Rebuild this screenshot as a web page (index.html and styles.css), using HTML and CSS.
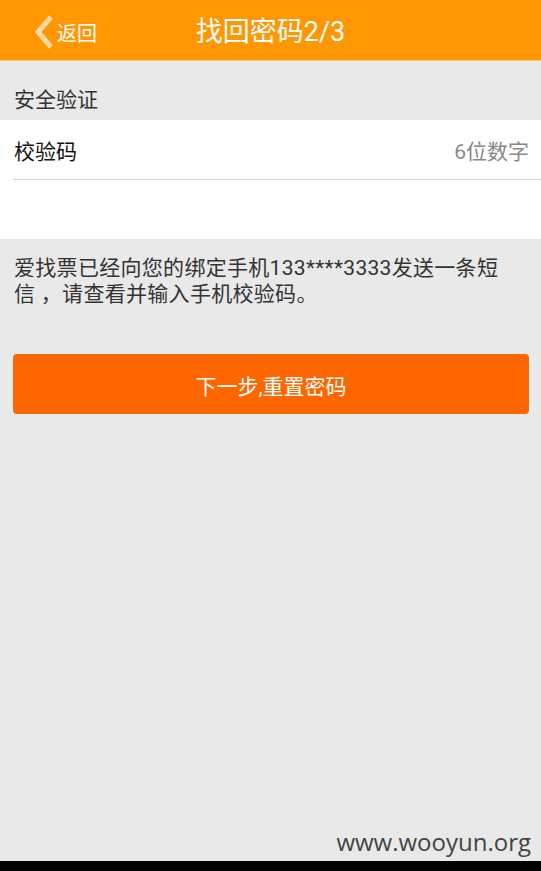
FILE: index.html
```html
<!DOCTYPE html>
<html lang="zh-CN">
<head>
<meta charset="utf-8">
<title>找回密码2/3</title>
<link rel="stylesheet" href="styles.css">
</head>
<body>
<div class="screen">
  <header class="topbar">
    <div class="back">
      <svg class="chev" width="22" height="34" viewBox="0 0 22 34"><polyline points="18,2 5,17 18,32" fill="none" stroke="#ffd9a3" stroke-width="5"/></svg>
      <span class="back-text">返回</span>
    </div>
    <h1 class="title">找回密码2/3</h1>
  </header>
  <main class="content">
    <div class="section-title">安全验证</div>
    <div class="form-block">
      <div class="row">
        <span class="label">校验码</span>
        <span class="placeholder">6位数字</span>
      </div>
      <div class="row-empty"></div>
    </div>
    <p class="msg">爱找票已经向您的绑定手机133****3333发送一条短信 ，请查看并输入手机校验码。</p>
    <button class="btn">下一步,重置密码</button>
    <div class="watermark">www.wooyun.org</div>
  </main>
  <div class="navbar"></div>
</div>
</body>
</html>
```
FILE: styles.css
```css
* { box-sizing: border-box; }
html, body { margin: 0; padding: 0; }
body {
  width: 541px;
  height: 871px;
  overflow: hidden;
  font-family: Roboto, "Noto Sans CJK SC", sans-serif;
  background: #e9e9e9;
}
.screen {
  display: flex;
  flex-direction: column;
  height: 871px;
}
.topbar {
  height: 61px;
  background: #ff9702;
  border-bottom: 1px solid #ffc56e;
  position: relative;
  display: flex;
  align-items: center;
  justify-content: center;
}
.back {
  position: absolute;
  left: 33px;
  top: 13px;
  display: flex;
  align-items: center;
}
.chev { display: block; }
.back-text {
  color: #fff;
  font-size: 20px;
  line-height: 34px;
  margin-left: 2px;
  padding-top: 4px;
}
.title {
  margin: 3px 0 0 0;
  color: #fff;
  font-size: 27px;
  font-weight: normal;
  line-height: 56px;
}
.content {
  flex: 1;
  position: relative;
  display: flex;
  flex-direction: column;
}
.section-title {
  height: 59px;
  padding: 25px 0 0 14px;
  font-size: 21px;
  line-height: 28px;
  color: #333;
}
.form-block {
  background: #fff;
}
.row {
  height: 60px;
  margin-left: 13px;
  padding: 0 12px 0 1px;
  border-bottom: 1px solid #d6d6d6;
  display: flex;
  align-items: center;
  justify-content: space-between;
}
.label {
  font-size: 21px;
  color: #111;
  margin-top: 1px;
}
.placeholder {
  font-size: 21px;
  color: #888;
  margin-top: 1px;
}
.row-empty {
  height: 59px;
}
.msg {
  margin: 16px 30px 0 14px;
  font-size: 21px;
  line-height: 26px;
  letter-spacing: 0.3px;
  color: #333;
}
.btn {
  margin: 47px 12px 0 13px;
  height: 60px;
  border: none;
  border-radius: 4px;
  background: #ff6600;
  color: #fff;
  font-family: Roboto, "Noto Sans CJK SC", sans-serif;
  font-size: 21px;
  padding: 2px 0 0 0;
}
.watermark {
  position: absolute;
  right: 10px;
  bottom: 3px;
  font-family: "Open Sans", sans-serif;
  font-size: 24px;
  color: #444;
}
.navbar {
  height: 10px;
  background: #000;
}
```
